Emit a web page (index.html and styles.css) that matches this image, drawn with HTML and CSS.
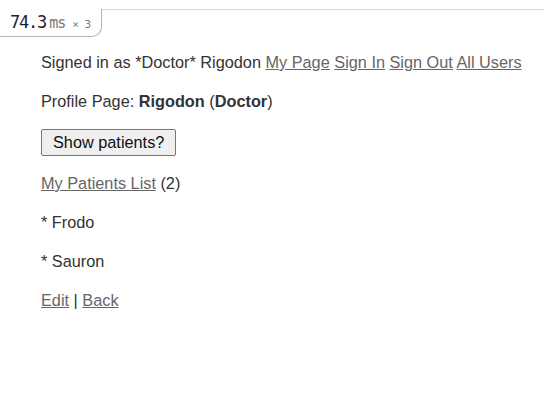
FILE: index.html
```html
<!DOCTYPE html>
<html>
<head>
<meta charset="utf-8">
<link rel="stylesheet" href="styles.css">
</head>
<body>
<div class="topbar">
  <div class="badge"><span class="num">74.3</span><span class="unit">ms</span><span class="count">× 3</span></div>
</div>
<main class="content">
  <p>Signed in as *Doctor* Rigodon <a href="#">My Page</a> <a href="#">Sign In</a> <a href="#">Sign Out</a> <a href="#">All Users</a></p>
  <p>Profile Page: <b>Rigodon</b> (<b>Doctor</b>)</p>
  <p class="btnrow"><button class="btn">Show patients?</button></p>
  <p><a href="#">My Patients List</a> (2)</p>
  <p>* Frodo</p>
  <p>* Sauron</p>
  <p><a href="#">Edit</a> | <a href="#">Back</a></p>
</main>
</body>
</html>
```

FILE: styles.css
```css
html, body {
  margin: 0;
  padding: 0;
  background: #fff;
}
body {
  font-family: "Liberation Sans", Arial, sans-serif;
  font-size: 16.3px;
  color: #333;
}
.topbar {
  margin-top: 9px;
  border-top: 1px solid #d6d6d6;
  height: 0;
  position: relative;
}
.badge {
  position: absolute;
  left: -1px;
  top: -1px;
  padding: 3px 10px 0 10px;
  border: 1px solid #b5b5b5;
  border-top: none;
  border-bottom-right-radius: 10px;
  background: #fff;
  display: flex;
  align-items: baseline;
  box-sizing: border-box;
  height: 28px;
  font-family: "DejaVu Sans Mono", monospace;
  white-space: pre;
}
.num {
  font-size: 17px;
  letter-spacing: -1.2px;
  color: #1c2333;
}
.unit {
  font-size: 15px;
  letter-spacing: -1px;
  color: #7a7a7a;
  margin-left: 3px;
}
.count {
  font-size: 11px;
  letter-spacing: -0.5px;
  color: #7a7a7a;
  margin-left: 7px;
}
.content {
  padding: 41px 0 0 41px;
}
.content p {
  margin: 0 0 16px 0;
  line-height: 23px;
}
.content p.btnrow {
  line-height: 27px;
  height: 27px;
}
a {
  color: #666;
  text-decoration: underline;
}
b {
  font-weight: bold;
}
.btn {
  font-family: "Liberation Sans", Arial, sans-serif;
  font-size: 16.3px;
  color: #111;
  background: #efefef;
  border: 1px solid #767676;
  border-radius: 2px;
  padding: 0 11px;
  height: 27px;
  vertical-align: top;
}
```
